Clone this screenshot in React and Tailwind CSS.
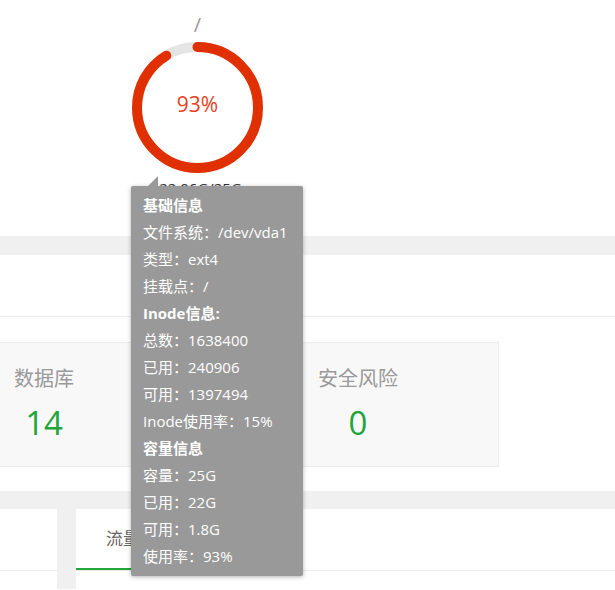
import React from 'react';

const usage = 93;

const DiskRing = ({ percent }) => {
    const r = 60.5;
    const c = 2 * Math.PI * r;
    // round caps eat into the gap, so the dash is a bit shorter than the value
    const red = (percent - 1.8) / 100 * c;
    return (
        <div className="relative w-[131px] h-[131px]">
            <svg width="131" height="131" viewBox="0 0 131 131" className="-rotate-90">
                <circle cx="65.5" cy="65.5" r={r} fill="none" stroke="#e5e5e5" strokeWidth="10" />
                <circle cx="65.5" cy="65.5" r={r} fill="none" stroke="#e03000" strokeWidth="10"
                    strokeLinecap="round" strokeDasharray={`${red} ${c}`} />
            </svg>
            <div className="absolute inset-0 flex items-center justify-center pb-[5px] text-[21px] text-[#e8401c]">
                {percent}%
            </div>
        </div>
    );
};

const tipLines = [
    { text: '基础信息', bold: true },
    { text: '文件系统：/dev/vda1' },
    { text: '类型：ext4' },
    { text: '挂载点：/' },
    { text: 'Inode信息:', bold: true },
    { text: '总数：1638400' },
    { text: '已用：240906' },
    { text: '可用：1397494' },
    { text: 'Inode使用率：15%' },
    { text: '容量信息', bold: true },
    { text: '容量：25G' },
    { text: '已用：22G' },
    { text: '可用：1.8G' },
    { text: '使用率：93%' },
];

const StatCard = ({ label, value, className }) => (
    <div className={`h-[125px] bg-[#f8f8f8] border border-[#ececec] pl-[27px] pt-[22px] ${className}`}>
        <div className="w-fit flex flex-col items-center">
            <div className="text-[20px] leading-[28px] text-[#999]">{label}</div>
            <div className="mt-[10px] text-[33px] leading-[40px] text-[#20a53a]">{value}</div>
        </div>
    </div>
);

const App = () => {
    return (
        <div className="relative w-[615px] h-[590px] overflow-hidden bg-white font-['Open_Sans','Noto_Sans_CJK_SC',sans-serif]">
            {/* disk */}
            <div className="h-[236px] pl-[132px]">
                <div className="w-[131px] flex flex-col items-center">
                    <div className="mt-[11px] h-[27px] text-[20px] leading-[27px] text-[#999]">/</div>
                    <div className="mt-[4px]">
                        <DiskRing percent={usage} />
                    </div>
                    <div className="mt-[5px] pl-[6px] text-[15px] leading-[20px] text-[#333]">22.06G/25G</div>
                </div>
            </div>

            <div className="h-[19px] bg-[#f0f0f0]" />

            <div className="h-[62px] border-b border-[#ececec]" />

            <div className="pt-[25px] pb-[24px] flex gap-[14px]">
                <StatCard label="数据库" value="14" className="ml-[-14px] w-[290px]" />
                <StatCard label="安全风险" value="0" className="w-[209px]" />
            </div>

            <div className="h-[18px] bg-[#f0f0f0]" />

            <div className="flex h-[80px] bg-[#f0f0f0]">
                <div className="w-[57px] bg-white">
                    <div className="h-[62px] border-b border-[#ececec]" />
                </div>
                <div className="ml-[19px] flex-1 bg-white">
                    <div className="h-[62px] border-b border-[#ececec] flex">
                        <div className="w-[94px] flex items-center justify-center border-b-2 border-[#20a53a] text-[17px] text-[#666]">
                            流量
                        </div>
                    </div>
                </div>
            </div>

            {/* tooltip */}
            <div className="absolute left-[131px] top-[186px] w-[172px] h-[390px] bg-[#999] rounded-[2px] shadow-[0_1px_4px_rgba(0,0,0,0.3)] pl-[12px] py-[6px] text-[15px] leading-[27px] text-white">
                <div className="absolute left-[17px] top-[-10px] w-[10px] h-[10px] bg-[#999] [clip-path:polygon(100%_0,100%_100%,0_100%)]" />
                {tipLines.map((line, i) => (
                    <div key={i} className={`whitespace-nowrap ${line.bold ? 'font-bold' : ''}`}>{line.text}</div>
                ))}
            </div>
        </div>
    );
};

export default App;
